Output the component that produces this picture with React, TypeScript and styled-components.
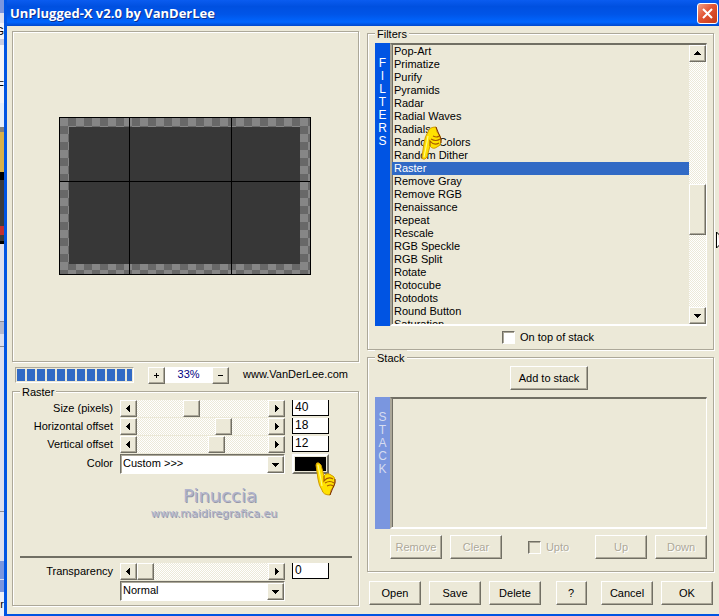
import React, { useState } from "react";
import styled, { createGlobalStyle, css } from "styled-components";

const face = "#ece9d8";
const edge = "#aca899";
const dark = "#716f64";
const blue = "#0054e3";
const highlight = "#316ac5";
const dither = css`
  background: repeating-conic-gradient(#ffffff 0 25%, ${face} 0 50%) 0 0 / 2px 2px;
`;
const raised = css`
  border: 1px solid;
  border-color: #ffffff ${dark} ${dark} #ffffff;
  box-shadow: inset -1px -1px 0 ${edge};
`;

const GlobalStyle = createGlobalStyle`
  * { box-sizing: border-box; }
  body {
    margin: 0;
    background: ${face};
    font: 11px/13px "Liberation Sans", Arial, sans-serif;
    color: #000;
  }
  button, input, select { font: inherit; color: inherit; margin: 0; border-radius: 0; }
`;

const Desktop = styled.div`
  position: relative;
  display: grid;
  grid-template-columns: 4px minmax(0, 1fr);
  min-height: 100vh;
  overflow: hidden;
`;
const Behind = styled.div`
  display: flex;
  flex-direction: column;
  overflow: hidden;
  background: #dcdfee;
`;
const Slice = styled.div<{ $h: number; $c: string }>`
  display: flex;
  flex: none;
  align-items: center;
  justify-content: flex-end;
  height: ${(p) => p.$h}px;
  background: ${(p) => p.$c};
`;
const Window = styled.main`
  display: flex;
  flex-direction: column;
  border-left: 3px solid ${blue};
  border-bottom: 2px solid ${blue};
  background: ${face};
`;
const TitleBar = styled.header`
  display: flex;
  align-items: center;
  justify-content: space-between;
  height: 26px;
  padding: 0 1px 0 3px;
  background: linear-gradient(#0a5cf0 0, #0050e0 25%, #0055e8 55%, #0066ff 85%, #0048cc 100%);
`;
const Title = styled.h1`
  margin: 0;
  font: bold 13px/20px "Open Sans", "Noto Sans", sans-serif;
  color: #fff;
  text-shadow: 1px 1px 0 #0f2f8c;
`;
const CloseButton = styled.button`
  display: grid;
  place-items: center;
  width: 21px;
  height: 21px;
  padding: 0;
  border: 1px solid #fff;
  border-radius: 3px;
  background: linear-gradient(135deg, #f0a088, #e25433 45%, #c43a18);
`;
const Body = styled.div`
  display: grid;
  flex: 1;
  grid-template-columns: minmax(0, 1fr) minmax(0, 1fr);
  gap: 8px;
  padding: 0 5px 8px;
`;
const Column = styled.div`
  display: flex;
  flex-direction: column;
`;
const Preview = styled.section`
  display: grid;
  place-items: center;
  height: 331px;
  margin-top: 5px;
  padding: 0 2px 2px 0;
  border: 1px solid ${edge};
  box-shadow: 1px 1px 0 #fff, inset 1px 1px 0 #fff;
`;
const Group = styled.fieldset`
  display: flex;
  flex-direction: column;
  min-width: 0;
  margin: 0;
  padding: 0 6px 0 7px;
  border: 1px solid ${edge};
  box-shadow: 1px 1px 0 #fff, inset 1px 1px 0 #fff;
`;
const FillGroup = styled(Group)`
  flex: 1;
  padding-bottom: 4px;
`;
const Legend = styled.legend`
  padding: 2px 2px 0;
  background: ${face};
`;
const StatusRow = styled.div`
  display: flex;
  align-items: center;
  height: 15px;
  margin: 5px 0 2px;
  padding: 0 11px 0 3px;
`;
const Progress = styled.progress`
  flex: 1;
  appearance: none;
  height: 16px;
  padding: 1px;
  border: 1px solid;
  border-color: ${edge} #fff #fff ${edge};
  background: ${face};
  &::-webkit-progress-bar { background: ${face}; }
  &::-webkit-progress-value {
    background: repeating-linear-gradient(90deg, ${highlight} 0 8px, ${face} 8px 10px);
  }
`;
const Zoom = styled.div`
  display: flex;
  width: 81px;
  height: 16px;
  margin: 0 14px;
`;
const ZoomValue = styled.output`
  flex: 1;
  background: #fff;
  color: #000080;
  line-height: 15px;
  text-align: center;
`;
const SmallButton = styled.button`
  display: grid;
  flex: none;
  place-items: center;
  width: 17px;
  height: 17px;
  padding: 0;
  background: ${face};
  ${raised}
`;
const Site = styled.a`
  color: #000;
  text-decoration: none;
  white-space: nowrap;
`;
const Row = styled.div`
  display: grid;
  flex: none;
  grid-template-columns: 100px minmax(0, 1fr) 37px;
  column-gap: 7px;
  align-items: center;
  height: 18px;
  margin-left: -7px;
  padding-right: 23px;
`;
const TallRow = styled(Row)`
  height: 21px;
`;
const Label = styled.label`
  text-align: right;
  white-space: nowrap;
`;
const Slider = styled.div`
  display: flex;
  min-width: 0;
  ${dither}
`;
const Range = styled.input`
  flex: 1;
  appearance: none;
  min-width: 0;
  height: 17px;
  background: transparent;
  &::-webkit-slider-thumb {
    appearance: none;
    width: 17px;
    height: 17px;
    background: ${face};
    ${raised}
  }
`;
const NumberBox = styled.input`
  width: 37px;
  height: 16px;
  padding: 0 2px 2px;
  border: 1px solid #000;
  border-top: 0;
  background: #fff;
  font-size: 12px;
`;
const Drop = styled.div`
  display: grid;
  grid-template-columns: minmax(0, 1fr) 17px;
  grid-column: 2;
  height: 20px;
  border: 1px solid;
  border-color: ${dark} #fff #fff ${dark};
  box-shadow: inset 1px 1px 0 ${edge};
  background: #fff;
`;
const Select = styled.select`
  grid-area: 1 / 1 / 2 / 3;
  appearance: none;
  padding: 0 2px;
  border: 0;
  background: transparent;
`;
const DropArrow = styled.span`
  display: grid;
  grid-area: 1 / 2;
  place-items: center;
  margin-top: 1px;
  background: ${face};
  pointer-events: none;
  ${raised}
`;
const Swatch = styled.button`
  height: 20px;
  padding: 0;
  border: 2px solid;
  border-color: #fff ${dark} ${dark} #fff;
  background: #000;
  outline: 1px solid ${face};
  outline-offset: -3px;
`;
const Signature = styled.div`
  display: flex;
  flex: 1;
  flex-direction: column;
  align-items: center;
  align-self: center;
  padding: 12px 0 0 56px;
  color: #b0b3cc;
  font: 11px/15px "Comic Sans MS", "DejaVu Sans", sans-serif;
  text-shadow: 1px 1px 0 #9698a8;
`;
const SignatureName = styled.strong`
  padding-left: 12px;
  font-size: 18px;
  font-weight: normal;
  line-height: 20px;
`;
const Rule = styled.hr`
  width: 100%;
  height: 2px;
  margin: 0 0 4px;
  border: 0;
  background: ${dark};
`;
const ListFrame = styled.div`
  display: grid;
  grid-template-columns: 15px minmax(0, 1fr);
`;
const FilterFrame = styled(ListFrame)`
  height: 283px;
  margin-top: 2px;
`;
const StackFrame = styled(ListFrame)`
  height: 132px;
  margin: 7px 0 6px;
`;
const Side = styled.div<{ $muted?: boolean }>`
  display: flex;
  flex-direction: column;
  align-items: center;
  padding-top: 14px;
  background: ${(p) => (p.$muted ? "#7a96df" : blue)};
  color: ${(p) => (p.$muted ? "#d6dcf0" : "#fff")};
  font-size: 12px;
`;
const Sunken = styled.div`
  display: grid;
  grid-template-columns: minmax(0, 1fr) auto;
  min-height: 0;
  border: 2px solid;
  border-right-width: 1px;
  border-color: ${dark} #fff #fff ${edge};
  box-shadow: inset 1px 0 0 ${dark};
`;
const List = styled.ul`
  margin: 0;
  padding: 0;
  overflow: hidden;
  list-style: none;
`;
const Item = styled.li<{ $on: boolean }>`
  height: 13px;
  padding-left: 2px;
  background: ${(p) => (p.$on ? highlight : "transparent")};
  color: ${(p) => (p.$on ? "#fff" : "#000")};
  white-space: nowrap;
`;
const ScrollBar = styled.div`
  display: flex;
  flex-direction: column;
  ${dither}
`;
const ScrollThumb = styled.div`
  height: 51px;
  margin-top: 122px;
  margin-bottom: auto;
  background: ${face};
  ${raised}
`;
const Check = styled.label<{ $off?: boolean }>`
  display: flex;
  align-items: center;
  gap: 5px;
  color: ${(p) => (p.$off ? edge : "#000")};
  text-shadow: ${(p) => (p.$off ? "1px 1px 0 #fff" : "none")};
`;
const CheckBox = styled.input`
  appearance: none;
  width: 13px;
  height: 13px;
  border: 1px solid;
  border-color: ${dark} #fff #fff ${dark};
  box-shadow: inset 1px 1px 0 ${edge};
  background: #fff;
  &:disabled { background: ${face}; }
`;
const TopOfStack = styled.div`
  display: flex;
  justify-content: center;
  padding: 5px 0 5px 14px;
`;
const Button = styled.button<{ $w?: number }>`
  width: ${(p) => p.$w ?? 52}px;
  height: 24px;
  padding: 0;
  background: ${face};
  ${raised}
  &:disabled {
    color: ${edge};
    text-shadow: 1px 1px 0 #fff;
  }
`;
const Centered = styled.div`
  display: flex;
  justify-content: center;
  padding: 1px 0 0 16px;
`;
const StackButtons = styled.div`
  display: flex;
  align-items: center;
  justify-content: space-between;
  padding: 0 0 12px 15px;
`;
const Cluster = styled.div`
  display: flex;
  gap: 8px;
`;
const Footer = styled.footer`
  display: flex;
  justify-content: space-between;
  padding: 9px 1px 0 2px;
`;
const Over = styled.svg<{ $x: number; $y: number }>`
  position: absolute;
  left: ${(p) => p.$x}px;
  top: ${(p) => p.$y}px;
  pointer-events: none;
`;

const arrows = {
  left: "M5 0v7L1 3.5z",
  right: "M2 0v7l4-3.5z",
  up: "M0 5h7L3.5 1z",
  down: "M0 2h7L3.5 6z",
};
const Arrow = ({ to }: { to: keyof typeof arrows }) => (
  <svg width="7" height="7" aria-hidden="true" shapeRendering="crispEdges">
    <path d={arrows[to]} />
  </svg>
);

function SliderRow({ label, start, min, max }: { label: string; start: number; min: number; max: number }) {
  const [value, setValue] = useState(start);
  const id = label.replace(/\W/g, "");
  return (
    <Row>
      <Label htmlFor={id}>{label}</Label>
      <Slider>
        <SmallButton aria-label={`Decrease ${label}`} onClick={() => setValue(Math.max(min, value - 1))}>
          <Arrow to="left" />
        </SmallButton>
        <Range id={id} type="range" min={min} max={max} value={value} onChange={(e) => setValue(+e.target.value)} />
        <SmallButton aria-label={`Increase ${label}`} onClick={() => setValue(Math.min(max, value + 1))}>
          <Arrow to="right" />
        </SmallButton>
      </Slider>
      <NumberBox aria-label={`${label} value`} value={value} onChange={(e) => setValue(+e.target.value || 0)} />
    </Row>
  );
}

function DropDown({ id, label, option }: { id: string; label?: string; option: string }) {
  return (
    <Drop>
      <Select id={id} aria-label={label}>
        <option>{option}</option>
      </Select>
      <DropArrow><Arrow to="down" /></DropArrow>
    </Drop>
  );
}

const Hand = () => (
  <>
    <path d="M1 3Q1 0 4 1L6 3L9 14Q12 10 16 13Q20 14 20 19Q20 25 16 28L15 33Q8 33 7 28Q4 24 3 17Z" fill="#ffe100" stroke="#d09a00" />
    <path d="M9 14v5q4-5 9-2M10 21q5-3 9 0M12 24q4-2 6 0" fill="none" stroke="#a85a00" strokeWidth="1.2" />
    <path d="M3 3l3 15 1 6" fill="none" stroke="#fff884" strokeWidth="1.2" />
    <path d="M20 17v4l-3 7-2 5" fill="none" stroke="#7c2c00" />
  </>
);

const filters = [
  "Pop-Art", "Primatize", "Purify", "Pyramids", "Radar", "Radial Waves", "Radials", "Random Colors",
  "Random Dither", "Raster", "Remove Gray", "Remove RGB", "Renaissance", "Repeat", "Rescale",
  "RGB Speckle", "RGB Split", "Rotate", "Rotocube", "Rotodots", "Round Button", "Saturation",
];

const slices: [number, string, string?][] = [
  [13, "#7a96df"], [10, "#dcdfee"], [16, "#f4f4f8", "G"], [6, "#c8cce0"], [23, "#f4f4f8"], [35, "#f4f4f8", "F"],
  [24, "#e4eefb"], [5, "#808080"], [40, "#d8b04a"], [8, "#000"], [46, "#3c3c3c"], [9, "#c03030"],
  [6, "#3c3c3c"], [3, "#000"], [77, "#dcdfee"], [1, "#8a8a94"], [12, "#b4b8cc"], [12, "#dcdfee"],
  [1, "#8a8a94"], [164, "#dcdfee"], [1, "#8a8a94"], [49, "#dcdfee"], [18, "#7a96df"], [1, "#dcdfee"],
  [12, "#7a96df"], [24, "#eef0f8", "r"],
];

export default function App() {
  const [selected, setSelected] = useState("Raster");
  return (
    <>
      <GlobalStyle />
      <Desktop>
        <Behind>
          {slices.map(([h, c, text], i) => <Slice key={i} $h={h} $c={c}>{text}</Slice>)}
        </Behind>
        <Window>
          <TitleBar>
            <Title>UnPlugged-X v2.0 by VanDerLee</Title>
            <CloseButton aria-label="Close">
              <svg width="13" height="13" aria-hidden="true">
                <path d="M2 2l9 9M11 2l-9 9" stroke="#fff" strokeWidth="2" />
              </svg>
            </CloseButton>
          </TitleBar>
          <Body>
            <Column>
              <Preview aria-label="Preview">
                <svg width="252" height="158" shapeRendering="crispEdges">
                  <defs>
                    <pattern id="checker" x="1" y="1" width="16" height="16" patternUnits="userSpaceOnUse">
                      <path d="M0 0h16v16H0z" fill="#868686" />
                      <path d="M8 0h8v8H8zM0 8h8v8H0z" fill="#686868" />
                    </pattern>
                  </defs>
                  <path d="M0 0h252v158H0z" />
                  <path d="M1 1h250v156H1z" fill="url(#checker)" />
                  <path d="M10 10h231v137H10z" fill="#373737" />
                  <path d="M70 0h1v158h-1zM172 0h1v158h-1zM0 64h252v1H0z" />
                </svg>
              </Preview>
              <StatusRow>
                <Progress aria-label="Progress" value={1} max={1} />
                <Zoom>
                  <SmallButton aria-label="Zoom in">
                    <svg width="7" height="7" aria-hidden="true" shapeRendering="crispEdges">
                      <path d="M1 3h5v1H1zM3 1h1v5H3z" />
                    </svg>
                  </SmallButton>
                  <ZoomValue>33%</ZoomValue>
                  <SmallButton aria-label="Zoom out">
                    <svg width="7" height="7" aria-hidden="true" shapeRendering="crispEdges">
                      <path d="M1 3h5v1H1z" />
                    </svg>
                  </SmallButton>
                </Zoom>
                <Site href="#site">www.VanDerLee.com</Site>
              </StatusRow>
              <FillGroup>
                <Legend>Raster</Legend>
                <SliderRow label="Size (pixels)" start={40} min={0} max={100} />
                <SliderRow label="Horizontal offset" start={18} min={-50} max={50} />
                <SliderRow label="Vertical offset" start={12} min={-50} max={50} />
                <TallRow>
                  <Label htmlFor="color">Color</Label>
                  <DropDown id="color" option="Custom >>>" />
                  <Swatch aria-label="Pick color" />
                </TallRow>
                <Signature>
                  <SignatureName>Pinuccia</SignatureName>
                  <span>www.maidiregrafica.eu</span>
                </Signature>
                <Rule />
                <SliderRow label="Transparency" start={0} min={0} max={100} />
                <TallRow>
                  <DropDown id="mode" label="Blend mode" option="Normal" />
                </TallRow>
              </FillGroup>
            </Column>
            <Column>
              <Group>
                <Legend>Filters</Legend>
                <FilterFrame>
                  <Side>{[..."FILTERS"].map((c, i) => <span key={i}>{c}</span>)}</Side>
                  <Sunken>
                    <List role="listbox" aria-label="Filters">
                      {filters.map((f) => (
                        <Item key={f} role="option" aria-selected={f === selected} $on={f === selected} onClick={() => setSelected(f)}>
                          {f}
                        </Item>
                      ))}
                    </List>
                    <ScrollBar>
                      <SmallButton aria-label="Scroll up"><Arrow to="up" /></SmallButton>
                      <ScrollThumb />
                      <SmallButton aria-label="Scroll down"><Arrow to="down" /></SmallButton>
                    </ScrollBar>
                  </Sunken>
                </FilterFrame>
                <TopOfStack>
                  <Check><CheckBox type="checkbox" />On top of stack</Check>
                </TopOfStack>
              </Group>
              <Group>
                <Legend>Stack</Legend>
                <Centered><Button $w={78}>Add to stack</Button></Centered>
                <StackFrame>
                  <Side $muted>{[..."STACK"].map((c, i) => <span key={i}>{c}</span>)}</Side>
                  <Sunken />
                </StackFrame>
                <StackButtons>
                  <Cluster><Button disabled>Remove</Button><Button disabled>Clear</Button></Cluster>
                  <Check $off><CheckBox type="checkbox" disabled />Upto</Check>
                  <Cluster><Button disabled>Up</Button><Button disabled>Down</Button></Cluster>
                </StackButtons>
              </Group>
              <Footer>
                <Cluster><Button>Open</Button><Button>Save</Button><Button>Delete</Button></Cluster>
                <Button $w={31}>?</Button>
                <Cluster><Button>Cancel</Button><Button>OK</Button></Cluster>
              </Footer>
            </Column>
          </Body>
        </Window>
        <Over $x={421} $y={126} width="22" height="35" aria-hidden="true">
          <g transform="translate(0 34) scale(1 -1)"><Hand /></g>
        </Over>
        <Over $x={315} $y={462} width="22" height="35" aria-hidden="true"><Hand /></Over>
        <Over $x={715} $y={231} width="4" height="20" aria-hidden="true">
          <path d="M1.500 1v16l4-4M1.500 1l6 6" fill="#fff" stroke="#000" />
        </Over>
      </Desktop>
    </>
  );
}
